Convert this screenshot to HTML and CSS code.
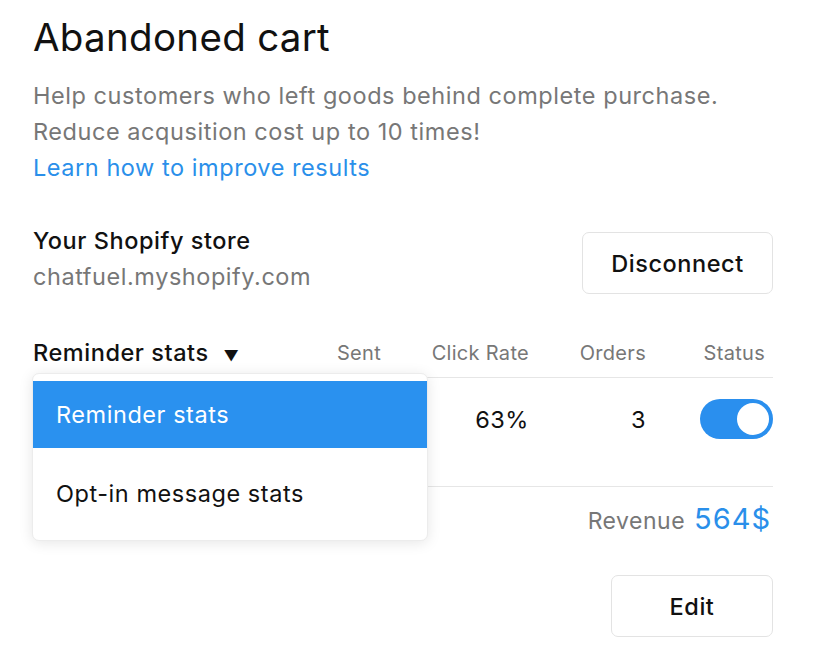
FILE: index.html
```html
<!DOCTYPE html>
<html lang="en">
<head>
  <meta charset="UTF-8" />
  <meta name="viewport" content="width=device-width, initial-scale=1.0"/>
  <title>Abandoned cart</title>
  <link rel="stylesheet" href="styles.css">
</head>
<body>
  <div class="container">
    <h1>Abandoned cart</h1>
    <p class="intro">
      Help customers who left goods behind complete purchase.<br>
      Reduce acqusition cost up to 10 times!<br>
      <a href="#" class="link">Learn how to improve results</a>
    </p>

    <div class="store">
      <div>
        <div class="store-title">Your Shopify store</div>
        <div class="store-url">chatfuel.myshopify.com</div>
      </div>
      <button class="btn btn-disconnect">Disconnect</button>
    </div>

    <div class="stats">
      <div class="stats-row stats-head">
        <div class="select">Reminder stats <span class="caret">&#9660;</span></div>
        <div>Sent</div>
        <div>Click Rate</div>
        <div>Orders</div>
        <div class="status">Status</div>
      </div>
      <div class="stats-row stats-body">
        <div></div>
        <div>12</div>
        <div>63%</div>
        <div>3</div>
        <div><span class="toggle"><span class="knob"></span></span></div>
      </div>

      <ul class="menu">
        <li class="active">Reminder stats</li>
        <li>Opt-in message stats</li>
      </ul>
    </div>

    <div class="revenue">Revenue <span class="amount">564$</span></div>

    <div class="actions">
      <button class="btn btn-edit">Edit</button>
    </div>
  </div>
</body>
</html>
```

FILE: styles.css
```css
body {
  margin: 0;
  font-family: Inter, "Noto Sans", sans-serif;
  background: #fff;
  color: #111;
}
.container {
  width: 740px;
  padding: 14px 0 0 33px;
}
h1 {
  margin: 0;
  font-size: 38.5px;
  font-weight: 400;
  line-height: 46px;
  letter-spacing: 0.3px;
}
.intro {
  margin: 18px 0 0;
  font-size: 23.5px;
  line-height: 36px;
  letter-spacing: 0.55px;
  color: #777;
}
.link {
  color: #2a8fea;
  text-decoration: none;
}
.store {
  display: flex;
  justify-content: space-between;
  align-items: flex-start;
  margin-top: 37px;
}
.store-title,
.store-url {
  font-size: 23.5px;
  line-height: 36px;
  letter-spacing: 0.55px;
}
.store-title {
  font-weight: 500;
}
.store-url {
  color: #777;
}
.btn {
  font-family: inherit;
  font-size: 23.5px;
  letter-spacing: 0.55px;
  font-weight: 500;
  color: #111;
  background: #fff;
  border: 1px solid #e3e3e3;
  border-radius: 7px;
  width: 191px;
  height: 62px;
  cursor: pointer;
}
.btn-disconnect {
  margin-top: 9px;
}
.stats {
  position: relative;
  margin-top: 34px;
}
.stats-row {
  display: grid;
  grid-template-columns: 1fr 100px 148px 117px 127px;
  align-items: center;
  text-align: right;
  border-bottom: 1px solid #e6e6e6;
}
.stats-head {
  font-size: 20px;
  letter-spacing: 0.3px;
  color: #777;
  height: 47px;
  padding-bottom: 1px;
}
.select {
  text-align: left;
  font-size: 23.5px;
  letter-spacing: 0.55px;
  color: #111;
  font-weight: 500;
}
.caret {
  font-size: 15px;
  margin-left: 8px;
}
.status {
  padding-right: 8px;
}
.stats-body {
  font-size: 23.5px;
  letter-spacing: 0.55px;
  padding: 21px 0 47px;
}
.toggle {
  display: inline-block;
  vertical-align: middle;
  width: 73px;
  height: 40px;
  border-radius: 20px;
  background: #2a8fee;
  position: relative;
}
.knob {
  position: absolute;
  right: 4px;
  top: 4px;
  width: 32px;
  height: 32px;
  border-radius: 50%;
  background: #fff;
}
.menu {
  position: absolute;
  left: -1px;
  top: 44px;
  width: 396px;
  height: 168px;
  box-sizing: border-box;
  margin: 0;
  padding: 7px 0 0;
  list-style: none;
  background: #fff;
  border: 1px solid #ececec;
  border-radius: 7px;
  box-shadow: 0 2px 14px rgba(0, 0, 0, 0.1);
}
.menu li {
  font-size: 23.5px;
  letter-spacing: 0.55px;
  height: 67px;
  line-height: 67px;
  padding-left: 23px;
  color: #111;
}
.menu li + li {
  height: 92px;
  line-height: 92px;
}
.menu li.active {
  background: #2a91ef;
  color: #fff;
}
.revenue {
  text-align: right;
  font-size: 23px;
  letter-spacing: 0.5px;
  color: #777;
  margin-top: 14px;
  padding-right: 2px;
}
.amount {
  font-size: 29px;
  letter-spacing: 1px;
  color: #2a8fea;
  margin-left: 2px;
}
.actions {
  display: flex;
  justify-content: flex-end;
  margin-top: 39px;
}
.btn-edit {
  width: 162px;
}
```
